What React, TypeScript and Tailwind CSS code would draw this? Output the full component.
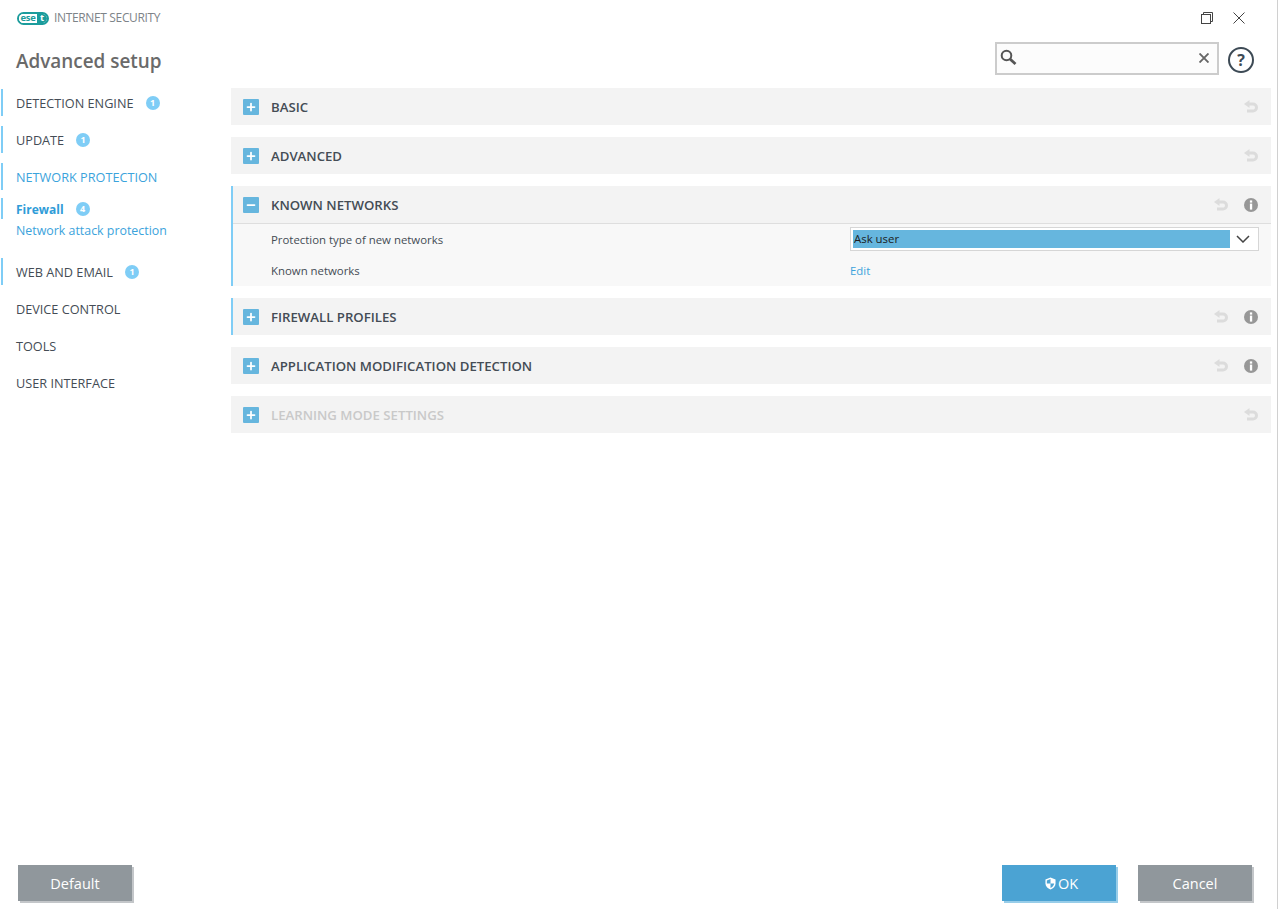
import { Minus, Plus } from "lucide-react";

const FONT = "font-['Open_Sans','Noto_Sans',sans-serif]";

type Panel = {
  title: string;
  open?: boolean;
  info?: boolean;
  dim?: boolean;
  active?: boolean;
};

const panels: Panel[] = [
  { title: "BASIC" },
  { title: "ADVANCED" },
  { title: "KNOWN NETWORKS", open: true, info: true, active: true },
  { title: "FIREWALL PROFILES", info: true, active: true },
  { title: "APPLICATION MODIFICATION DETECTION", info: true },
  { title: "LEARNING MODE SETTINGS", dim: true },
];

function Badge({ n }: { n: number }) {
  return (
    <span className="flex h-[14px] w-[14px] items-center justify-center rounded-full bg-[#7fcdf6] text-[9px] leading-none font-bold text-white">
      {n}
    </span>
  );
}

function NavItem({ label, badge, marked, blue }: { label: string; badge?: number; marked?: boolean; blue?: boolean }) {
  return (
    <div className={`flex h-[27px] items-center gap-3 border-l-2 pl-[13px] ${marked ? "border-[#7fcdf6]" : "border-transparent"}`}>
      <span className={`pt-[2px] text-[12.7px] leading-none ${blue ? "text-[#3ba3dc]" : "text-[#444c55]"}`}>{label}</span>
      {badge ? <Badge n={badge} /> : null}
    </div>
  );
}

function UndoIcon() {
  return (
    <svg width="14" height="13" viewBox="0 0 14 13" fill="none">
      <path d="M5.5 0 L0 4 L5.5 8 Z" fill="#dcdcdc" />
      <path d="M4 4 H9 A3.5 3.5 0 0 1 9 11 H3" stroke="#dcdcdc" strokeWidth="3" />
    </svg>
  );
}

function InfoIcon() {
  return (
    <svg width="14" height="14" viewBox="0 0 14 14">
      <circle cx="7" cy="7" r="7" fill="#979797" />
      <rect x="5.9" y="2.4" width="2.3" height="2.2" fill="#fff" />
      <rect x="5.9" y="5.6" width="2.3" height="6" fill="#fff" />
    </svg>
  );
}

function PanelRow({ panel }: { panel: Panel }) {
  return (
    <section className={`border-l-2 bg-[#f3f3f3] ${panel.active ? "border-[#7fcdf6]" : "border-transparent"}`}>
      <div className={`flex items-center pl-[10px] pr-[13px] ${panel.open ? "h-[38px] border-b border-[#dedede]" : "h-[37px]"}`}>
        <span className="flex h-4 w-4 items-center justify-center rounded-[1px] bg-[#66b6de] text-white">
          {panel.open ? <Minus size={12} strokeWidth={3.5} /> : <Plus size={12} strokeWidth={3.5} />}
        </span>
        <h2 className={`ml-3 pt-[2px] text-[13.2px] leading-none font-semibold ${panel.dim ? "text-[#c9c9c9]" : "text-[#444c55]"}`}>{panel.title}</h2>
        <div className="ml-auto flex items-center gap-4">
          <UndoIcon />
          {panel.info ? <InfoIcon /> : null}
        </div>
      </div>
      {panel.open ? (
        <div className="h-[62px] bg-[#f8f8f8] pl-[38px] pr-3 text-[11.4px] text-[#444c55]">
          <div className="flex h-[31px] items-center">
            <span className="w-[579px]">Protection type of new networks</span>
            <div className="-mt-[2px] flex h-[24px] flex-1 items-center border border-[#d6d6d6] bg-white p-[2px]">
              <span className="flex h-[18px] flex-1 items-center bg-[#66b6de] pl-[1px] text-[#1c1c1c]">Ask user</span>
              <svg className="mx-[6px]" width="14" height="8" viewBox="0 0 14 8" fill="none">
                <path d="M1 1 L7 7 L13 1" stroke="#444" strokeWidth="1.5" />
              </svg>
            </div>
          </div>
          <div className="flex h-[31px] items-center">
            <span className="w-[579px]">Known networks</span>
            <span className="text-[#3ba3dc]">Edit</span>
          </div>
        </div>
      ) : null}
    </section>
  );
}

function Button({ label, primary }: { label: string; primary?: boolean }) {
  return (
    <button
      className={`flex h-[36px] w-[114px] items-center justify-center pt-[1px] text-[14.5px] text-white ${
        primary ? "bg-[#4ba3d3] pl-[5px] shadow-[2px_2px_0_#97cde9]" : "bg-[#90979c] shadow-[2px_2px_0_#c3c6c9]"
      }`}
    >
      {primary ? (
        <svg className="mr-[2px]" width="11" height="13" viewBox="0 0 12 14">
          <path d="M6 0.5 L11.5 2.5 V7 C11.5 10 9 12.5 6 13.5 C3 12.5 0.5 10 0.5 7 V2.5 Z" fill="#fff" />
          <path d="M6 2.2 V7 H2 V3.6 Z M6 7 H10 C9.8 9 8 11 6 12 Z" fill="#4ba3d3" />
        </svg>
      ) : null}
      {label}
    </button>
  );
}

export default function App() {
  return (
    <div className={`${FONT} flex h-[909px] w-[1278px] flex-col border-r border-[#d0d0d0] bg-white`}>
      <header className="flex h-[88px] shrink-0 justify-between">
        <div className="pl-[17px]">
          <div className="flex h-[36px] items-center gap-[5px]">
            <div className="flex h-[13px] w-[32px] overflow-hidden rounded-full border-2 border-[#1b9c9c] text-[9.5px] leading-none font-bold">
              <span className="flex w-[18px] items-center justify-center bg-white pb-[1px] tracking-[-0.3px] text-[#1b9c9c]">ese</span>
              <span className="flex flex-1 items-center justify-center bg-[#1b9c9c] pb-[1px] text-white">t</span>
            </div>
            <span className="text-[12px] leading-none tracking-[-0.35px] text-[#7d8388]">INTERNET SECURITY</span>
          </div>
          <h1 className="-ml-px mt-[11px] text-[18.9px] leading-[28px] font-semibold text-[#6a6a6a]">Advanced setup</h1>
        </div>
        <div className="flex flex-col items-end pr-[23px]">
          <div className="flex h-[36px] items-center gap-[20px] pr-[9px]">
            <svg width="12" height="12" viewBox="0 0 12 12" fill="none" stroke="#444">
              <rect x="0.5" y="2.5" width="9" height="9" />
              <path d="M2.5 2.5 V0.5 H11.5 V9.5 H9.5" />
            </svg>
            <svg width="12" height="12" viewBox="0 0 12 12" fill="none" stroke="#444">
              <path d="M0.5 0.5 L11.5 11.5 M11.5 0.5 L0.5 11.5" />
            </svg>
          </div>
          <div className="mt-[6px] flex items-center gap-[9px]">
            <div className="flex h-[33px] w-[224px] items-center justify-between border-2 border-[#cccccc] bg-[#fcfcfc] pl-[3px] pr-[8px]">
              <svg className="-mt-[1px]" width="18" height="18" viewBox="0 0 18 18" fill="none">
                <circle cx="6.5" cy="6.5" r="4.8" stroke="#555" strokeWidth="2" />
                <path d="M10 10 L15.5 15" stroke="#555" strokeWidth="2.8" />
              </svg>
              <svg className="-mt-[1px]" width="10" height="10" viewBox="0 0 10 10" fill="none">
                <path d="M0.5 0.5 L9.5 9.5 M9.5 0.5 L0.5 9.5" stroke="#666" strokeWidth="1.9" />
              </svg>
            </div>
            <span className="mt-[2px] flex h-[26px] w-[26px] items-center justify-center rounded-full border-2 border-[#3d4a55] text-[16px] leading-none font-bold text-[#3d4a55]">?</span>
          </div>
        </div>
      </header>

      <div className="flex flex-1">
        <nav className="w-[231px] shrink-0 pl-[1px] pt-[1px]">
          <div className="flex flex-col gap-[10px]">
            <NavItem label="DETECTION ENGINE" badge={1} marked />
            <NavItem label="UPDATE" badge={1} marked />
            <NavItem label="NETWORK PROTECTION" marked blue />
          </div>
          <div className="mt-[8px] flex h-[21px] items-center gap-3 border-l-2 border-[#7fcdf6] pl-[13px]">
            <span className="pt-[2px] text-[12px] leading-none font-bold text-[#2f9cd8]">Firewall</span>
            <Badge n={4} />
          </div>
          <div className="flex h-[22px] items-center pl-[15px] pt-[2px] text-[12.4px] text-[#3ba3dc]">Network attack protection</div>
          <div className="mt-[17px] flex flex-col gap-[10px]">
            <NavItem label="WEB AND EMAIL" badge={1} marked />
            <NavItem label="DEVICE CONTROL" />
            <NavItem label="TOOLS" />
            <NavItem label="USER INTERFACE" />
          </div>
        </nav>
        <main className="flex w-[1040px] flex-col gap-[12px]">
          {panels.map((p) => (
            <PanelRow key={p.title} panel={p} />
          ))}
        </main>
      </div>

      <footer className="flex h-[44px] shrink-0 items-start justify-between pl-[18px] pr-[25px]">
        <Button label="Default" />
        <div className="flex gap-[22px]">
          <Button label="OK" primary />
          <Button label="Cancel" />
        </div>
      </footer>
    </div>
  );
}
